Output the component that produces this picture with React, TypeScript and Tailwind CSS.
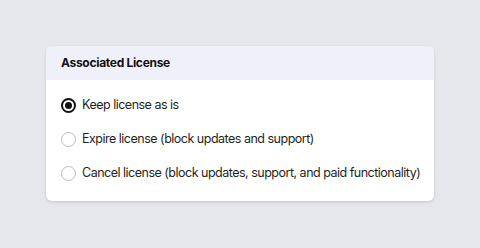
import React from "react";

const options = [
  "Keep license as is",
  "Expire license (block updates and support)",
  "Cancel license (block updates, support, and paid functionality)",
];

export default function App() {
  return (
    <div
      className="w-[480px] h-[248px] bg-[#e5e7eb] pt-[46px] pl-[46px]"
      style={{ fontFamily: "Inter, 'Noto Sans', sans-serif" }}
    >
      <div className="w-[388px] h-[155px] bg-white rounded-[6px] shadow-[0_1px_3px_rgba(0,0,0,0.15)] overflow-hidden">
        <div className="h-[34px] bg-[#f0f0fa] flex items-center pl-[15px] text-[12px] font-bold tracking-[-0.3px] text-[#111]">
          Associated License
        </div>
        <div className="flex flex-col pt-[8px]">
          {options.map((o, i) => (
            <div key={o} className="h-[34px] flex items-center pl-[15px] gap-[6px] text-[12.5px] tracking-[-0.5px] text-[#1f1f1f] whitespace-nowrap">
              {i === 0 ? (
                <span className="w-[15px] h-[15px] rounded-full border-[2px] border-[#111] flex items-center justify-center shrink-0">
                  <span className="w-[7px] h-[7px] rounded-full bg-[#111]" />
                </span>
              ) : (
                <span className="w-[15px] h-[15px] rounded-full border border-[#b9bcc3] bg-white shrink-0" />
              )}
              <span>{o}</span>
            </div>
          ))}
        </div>
      </div>
    </div>
  );
}
